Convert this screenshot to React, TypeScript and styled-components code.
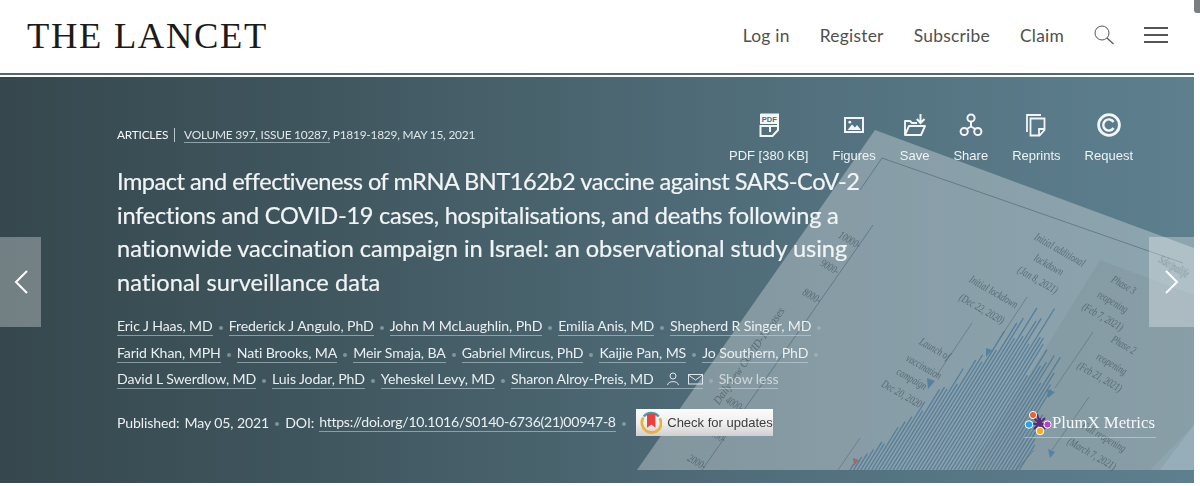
import React from "react";
import styled, { createGlobalStyle } from "styled-components";

const GlobalStyle = createGlobalStyle`
  html, body { margin: 0; padding: 0; background: #fff; }
  body { width: 1200px; height: 486px; overflow: hidden; font-family: "Lato", "Liberation Sans", sans-serif; }
`;

const Page = styled.div`
  display: flex;
  width: 1200px;
  height: 486px;
`;
const Main = styled.div`
  flex: 1;
  min-width: 0;
`;
const Scrollbar = styled.div`
  width: 6px;
`;
const Thumb = styled.div`
  height: 13px;
  background: #7b7f82;
  border-radius: 0 0 0 3px;
`;

const Header = styled.header`
  height: 73px;
  display: flex;
  align-items: center;
  justify-content: space-between;
  padding: 0 26px 3px 27px;
  box-sizing: border-box;
`;
const Logo = styled.div`
  font-family: "Liberation Serif", serif;
  font-size: 36.5px;
  letter-spacing: 1.7px;
  color: #1d1a1a;
  white-space: nowrap;
`;
const Nav = styled.nav`
  display: flex;
  align-items: center;
  gap: 30px;
`;
const NavLink = styled.a`
  font-family: "Lato", sans-serif;
  font-size: 17.4px;
  color: #505050;
  letter-spacing: 0.25px;
`;
const IconButton = styled.span`
  display: flex;
  color: #555;
`;
const Rule = styled.div`
  height: 4px;
  box-sizing: border-box;
  border-top: 2px solid #4d6a74;
  background: #fff;
`;

const Hero = styled.section`
  position: relative;
  height: 406px;
  overflow: hidden;
  background: linear-gradient(90deg, #36484e 0%, #3f555d 25%, #4b6671 50%, #557482 75%, #5d7f8e 100%);
`;
const Art = styled.svg`
  position: absolute;
  left: 0;
  top: 0;
`;
const HeroBody = styled.div`
  position: relative;
  padding: 36px 61px 0 117px;
`;
const TopRow = styled.div`
  display: flex;
  justify-content: space-between;
  align-items: flex-start;
`;
const Meta = styled.div`
  display: flex;
  align-items: center;
  margin-top: 13px;
  font-size: 11.9px;
  letter-spacing: -0.23px;
  color: #dfe6e9;
  white-space: nowrap;
`;
const MetaLabel = styled.span`
  color: #f4f6f7;
`;
const MetaDivider = styled.span`
  width: 1px;
  height: 14px;
  margin: 0 9px 0 6px;
  background: #b9c6cb;
`;
const MetaLink = styled.span`
  border-bottom: 1px solid #8fa3ab;
  line-height: 17px;
`;
const Toolbar = styled.div`
  display: flex;
  gap: 24px;
`;
const ToolItem = styled.a`
  display: flex;
  flex-direction: column;
  align-items: center;
  gap: 10px;
  color: #eef3f5;
  font-family: "Liberation Sans", sans-serif;
  font-size: 13px;
  line-height: 18px;
  white-space: nowrap;
`;
const ToolIcon = styled.svg`
  display: block;
  color: #f3f6f7;
`;
const Title = styled.h1`
  margin: 0;
  font-family: "Lato", sans-serif;
  font-size: 23.6px;
  line-height: 33.6px;
  font-weight: 400;
  color: #f1f4f5;
  white-space: nowrap;
  -webkit-text-stroke: 0.2px #f1f4f5;
`;
const TitleLine = styled.span<{ $tracking: number }>`
  display: block;
  letter-spacing: ${(p) => p.$tracking}px;
`;
const Authors = styled.div`
  margin-top: 14px;
`;
const AuthorLine = styled.div`
  display: flex;
  align-items: center;
  height: 26.6px;
  font-size: 14.1px;
  letter-spacing: -0.1px;
  color: #eaeff1;
  white-space: nowrap;
`;
const LinkText = styled.a<{ $faint?: boolean; $tight?: boolean }>`
  line-height: 18px;
  border-bottom: 1px solid ${(p) => (p.$faint ? "rgba(255,255,255,.35)" : "rgba(200,215,222,.55)")};
  color: ${(p) => (p.$faint ? "rgba(255,255,255,.6)" : "inherit")};
  ${(p) => (p.$tight ? "letter-spacing: -0.27px;" : "")}
`;
const Dot = styled.span`
  width: 4px;
  height: 4px;
  margin: 3px 6px 0;
  border-radius: 50%;
  background: rgba(170, 185, 192, 0.6);
`;
const PersonMail = styled.span`
  display: inline-flex;
  align-items: center;
  gap: 8px;
  margin-left: 12px;
  color: #dfe7ea;
  vertical-align: -2px;
`;
const BottomRow = styled.div`
  display: flex;
  align-items: center;
  height: 27px;
  margin-top: 16px;
  margin-right: -23px;
  font-size: 14.1px;
  letter-spacing: -0.12px;
  color: #eaeff1;
  white-space: nowrap;
`;
const FieldLabel = styled.span`
  margin-right: 5px;
`;
const UpdatesButton = styled.a`
  display: flex;
  align-items: center;
  gap: 5px;
  height: 27px;
  width: 137px;
  box-sizing: border-box;
  padding-left: 4px;
  margin-left: 4px;
  background: linear-gradient(180deg, #fbfbfb 0%, #eee 55%, #cfcfcf 100%);
  color: #3c3c3c;
  font-family: "Liberation Sans", sans-serif;
  font-size: 13px;
  letter-spacing: 0;
`;
const Plum = styled.a`
  display: flex;
  align-items: center;
  gap: 0;
  margin-left: auto;
  height: 29px;
  margin-top: 1px;
  width: 132px;
  border-bottom: 1px solid rgba(255, 255, 255, 0.35);
  font-family: "Liberation Serif", serif;
  font-size: 16.8px;
  letter-spacing: 0;
  color: #f6f8f9;
`;
const Pager = styled.a<{ $side: "left" | "right" }>`
  position: absolute;
  top: 160px;
  ${(p) => (p.$side === "left" ? "left: 0; width: 41px;" : "right: 0; width: 45px;")}
  height: 90px;
  display: flex;
  align-items: center;
  justify-content: center;
  background: rgba(255, 255, 255, 0.3);
  color: #fff;
`;

const author1 = ["Eric J Haas, MD", "Frederick J Angulo, PhD", "John M McLaughlin, PhD", "Emilia Anis, MD", "Shepherd R Singer, MD"];
const author2 = ["Farid Khan, MPH", "Nati Brooks, MA", "Meir Smaja, BA", "Gabriel Mircus, PhD", "Kaijie Pan, MS", "Jo Southern, PhD"];
const author3 = ["David L Swerdlow, MD", "Luis Jodar, PhD", "Yeheskel Levy, MD"];

// outline of the epidemic curve in the background figure: x at the paper foot -> height
const curve: [number, number][] = [
  [850, 8], [867, 32], [878, 60], [889, 82], [907, 113], [927, 158], [934, 163], [948, 157],
  [956, 163], [967, 123], [993, 113], [1006, 63], [1021, 20],
];
const curveAt = (x: number) => {
  for (let i = 1; i < curve.length; i++) {
    if (x <= curve[i][0]) {
      const [x0, h0] = curve[i - 1];
      const [x1, h1] = curve[i];
      return h0 + ((x - x0) / (x1 - x0)) * (h1 - h0);
    }
  }
  return 0;
};
const bars: [number, number][] = [];
for (let x = 850; x <= 1021; x += 3.6) {
  const i = bars.length;
  bars.push([x, curveAt(x) * (0.74 + 0.26 * Math.abs(Math.sin(i * 1.9)))]);
}

const labels: [string, number, number][] = [
  ["Initial additional", 1058, 253],
  ["lockdown", 1047, 268],
  ["(Jan 8, 2021)", 1036, 283],
  ["Initial lockdown", 992, 295],
  ["(Dec 22, 2020)", 980, 312],
  ["Launch of", 933, 352],
  ["vaccination", 922, 370],
  ["campaign", 910, 382],
  ["Dec 20, 2020", 900, 397],
  ["Phase 3", 1122, 288],
  ["reopening", 1111, 305],
  ["(Feb 7, 2021)", 1101, 320],
  ["Phase 2", 1122, 348],
  ["reopening", 1110, 367],
  ["(Feb 21, 2021)", 1098, 380],
  ["Full reopening", 1102, 440],
  ["(March 7, 2021)", 1090, 457],
  ["10000-", 848, 243],
  ["9000-", 828, 270],
  ["8000-", 810, 299],
  ["4000-", 733, 407],
  ["3000-", 715, 438],
  ["2000-", 695, 465],
  ["Sde/palife", 1172, 270],
];

const Background = () => (
  <Art width="1194" height="406" viewBox="0 77 1194 406">
    <polygon points="875,130 1194,248 1194,470 637,470" fill="#fff" opacity="0.3" />
    <polygon points="1100,260 1194,295 1194,425 1150,470 970,470" fill="#6d7c7e" opacity="0.16" />
    <polygon points="1194,425 1194,470 1160,470" fill="#a8c4d2" opacity="0.3" />
    <g stroke="#4a6573" strokeWidth="0.8" fill="none" opacity="0.75">
      <path d="M882 158 L1183 263" />
      <path d="M882 158 L860 190" />
      <path d="M873 225 L702 470" />
    </g>
    <g stroke="#4a7797" strokeWidth="1.2" opacity="0.85">
      {bars.map(([x, h], i) => (
        <line key={i} x1={x} y1={470} x2={x + h * 0.62} y2={470 - h} />
      ))}
    </g>
    <g stroke="#5b7480" strokeWidth="0.8" opacity="0.8">
      <path d="M972 323 L937 375" />
      <path d="M1027 297 L1000 338" />
      <path d="M1093 332 L1055 388" />
      <path d="M1089 397 L1052 450" />
      <path d="M860 438 L838 470" />
      <path d="M1034 450 L1016 470" />
    </g>
    <g fill="#4d7ea3" opacity="0.85">
      <polygon points="927,378 935,381 928,389" />
      <polygon points="986,348 992,350 986,357" />
      <polygon points="1047,389 1055,392 1048,398" />
      <polygon points="1048,449 1055,452 1050,458" />
    </g>
    <polygon points="853,458 859,460 854,466" fill="#a0605c" opacity="0.8" />
    <g fontFamily="Liberation Serif, serif" fontSize="11.5" fontStyle="italic" fill="#44555e" opacity="0.7" textAnchor="middle">
      {labels.map(([text, x, y], i) => (
        <text key={i} transform={`translate(${x} ${y}) rotate(30) scale(0.72 1)`}>{text}</text>
      ))}
      <text transform="translate(752 358) rotate(-55) scale(0.9 1)">Daily new COVID-19 cases</text>
    </g>
  </Art>
);

const PdfIcon = () => (
  <ToolIcon width="24" height="24" viewBox="0 0 24 24">
    <path d="M3.5 1.5 H21 V17 L15.5 23 H3.5 V13 H13 V19 M13 13 H21" fill="none" stroke="currentColor" strokeWidth="2" />
    <rect x="3" y="1" width="18.5" height="10" fill="currentColor" />
    <text x="12.3" y="9" textAnchor="middle" fontFamily="Liberation Sans, sans-serif" fontWeight="700" fontSize="7.5" fill="#4f6d7a">PDF</text>
  </ToolIcon>
);
const FiguresIcon = () => (
  <ToolIcon width="24" height="24" viewBox="0 0 24 24">
    <rect x="3" y="5" width="18" height="14" fill="none" stroke="currentColor" strokeWidth="2" />
    <circle cx="7.8" cy="9.2" r="1.4" fill="currentColor" />
    <path d="M5.5 17 L10 11.5 L13 14.5 L15 12 L19 17 Z" fill="currentColor" />
  </ToolIcon>
);
const SaveIcon = () => (
  <ToolIcon width="24" height="24" viewBox="0 0 24 24">
    <path d="M2 22 V8 H7 L9 10 H14 M2 22 L6 13 H22 L18 22 Z" fill="none" stroke="currentColor" strokeWidth="1.9" strokeLinejoin="round" />
    <path d="M17.5 1 V9 M13.8 6 L17.5 10 L21.5 6" fill="none" stroke="currentColor" strokeWidth="2" />
  </ToolIcon>
);
const ShareIcon = () => (
  <ToolIcon width="24" height="24" viewBox="0 0 24 24">
    <g fill="none" stroke="currentColor" strokeWidth="2">
      <circle cx="12" cy="5" r="3.6" />
      <circle cx="5.2" cy="18.5" r="3.6" />
      <circle cx="18.8" cy="18.5" r="3.6" />
      <path d="M12 8.6 V13.5 M12 13.5 L7.8 16 M12 13.5 L16.2 16" />
    </g>
  </ToolIcon>
);
const ReprintsIcon = () => (
  <ToolIcon width="24" height="24" viewBox="0 0 24 24">
    <g fill="none" stroke="currentColor" strokeWidth="1.8">
      <path d="M17 2 H3 V19" />
      <path d="M6.5 5.5 H20.5 V17 L15.5 22.5 H6.5 Z" />
      <path d="M20 16 H15 V22" />
    </g>
  </ToolIcon>
);
const RequestIcon = () => (
  <ToolIcon width="24" height="24" viewBox="0 0 24 24">
    <circle cx="12" cy="12" r="10.4" fill="none" stroke="currentColor" strokeWidth="2.8" />
    <path d="M16.6 9 A5.6 5.6 0 1 0 16.6 15" fill="none" stroke="currentColor" strokeWidth="2.4" />
  </ToolIcon>
);

const tools = [
  { label: "PDF [380 KB]", icon: <PdfIcon /> },
  { label: "Figures", icon: <FiguresIcon /> },
  { label: "Save", icon: <SaveIcon /> },
  { label: "Share", icon: <ShareIcon /> },
  { label: "Reprints", icon: <ReprintsIcon /> },
  { label: "Request", icon: <RequestIcon /> },
];

const titleLines: [string, number][] = [
  ["Impact and effectiveness of mRNA BNT162b2 vaccine against SARS-CoV-2", -0.5],
  ["infections and COVID-19 cases, hospitalisations, and deaths following a", -0.24],
  ["nationwide vaccination campaign in Israel: an observational study using", -0.04],
  ["national surveillance data", 0.08],
];

const Chevron = ({ dir }: { dir: "left" | "right" }) => (
  <svg width="16" height="26" viewBox="0 0 16 26">
    <path d={dir === "left" ? "M14 2 L3 13 L14 24" : "M2 2 L13 13 L2 24"} fill="none" stroke="currentColor" strokeWidth="2" />
  </svg>
);

const CrossmarkIcon = () => (
  <svg width="24" height="24" viewBox="0 0 24 24">
    <path d="M3.6 6 A10.5 10.5 0 0 0 20.4 18.5 A10.5 10.5 0 0 0 21 7" fill="none" stroke="#e9b23f" strokeWidth="3" />
    <path d="M4 5 A10.5 10.5 0 0 1 20 5" fill="none" stroke="#3f9fb8" strokeWidth="2.6" />
    <path d="M7.5 2 H16.5 V17 L12 13.5 L7.5 17 Z" fill="#e8423f" />
  </svg>
);

const PlumIcon = () => (
  <svg width="28" height="26" viewBox="0 0 28 26">
    <path d="M13 4 L16 14 M5 14 L26 14 M16 8 L16 21 M10 8 L21 19 M21 8 L10 19" stroke="#5b2a7c" strokeWidth="2" />
    <circle cx="9" cy="5" r="3.6" fill="#e8622c" stroke="#fff" strokeWidth="1" />
    <circle cx="5" cy="14.5" r="3.8" fill="#2aa4de" stroke="#fff" strokeWidth="1" />
    <circle cx="23.5" cy="14.5" r="3.6" fill="#b63fd0" stroke="#fff" strokeWidth="1" />
    <circle cx="16" cy="21" r="3.8" fill="#eeb021" stroke="#fff" strokeWidth="1" />
  </svg>
);

const AuthorRow = ({ names }: { names: string[] }) => (
  <>
    {names.map((name) => (
      <React.Fragment key={name}>
        <LinkText>{name}</LinkText>
        <Dot />
      </React.Fragment>
    ))}
  </>
);

export default function App() {
  return (
    <Page>
      <GlobalStyle />
      <Main>
        <Header>
          <Logo>THE LANCET</Logo>
          <Nav>
            <NavLink>Log in</NavLink>
            <NavLink>Register</NavLink>
            <NavLink>Subscribe</NavLink>
            <NavLink>Claim</NavLink>
            <IconButton>
              <svg width="20" height="20" viewBox="0 0 20 20">
                <circle cx="8" cy="8" r="7" fill="none" stroke="currentColor" strokeWidth="1" />
                <path d="M13 13 L19.5 19" stroke="currentColor" strokeWidth="1.2" />
              </svg>
            </IconButton>
            <IconButton>
              <svg width="24" height="18" viewBox="0 0 24 18">
                <path d="M0 2 H24 M0 9 H24 M0 16 H24" stroke="currentColor" strokeWidth="2" />
              </svg>
            </IconButton>
          </Nav>
        </Header>
        <Rule />
        <Hero>
          <Background />
          <HeroBody>
            <TopRow>
              <Meta>
                <MetaLabel>ARTICLES</MetaLabel>
                <MetaDivider />
                <span>
                  <MetaLink>VOLUME 397, ISSUE 10287,</MetaLink> P1819-1829, MAY 15, 2021
                </span>
              </Meta>
              <Toolbar>
                {tools.map((tool) => (
                  <ToolItem key={tool.label}>
                    {tool.icon}
                    {tool.label}
                  </ToolItem>
                ))}
              </Toolbar>
            </TopRow>
            <Title>
              {titleLines.map(([line, tracking]) => (
                <TitleLine key={line} $tracking={tracking}>
                  {line}
                </TitleLine>
              ))}
            </Title>
            <Authors>
              <AuthorLine>
                <AuthorRow names={author1} />
              </AuthorLine>
              <AuthorLine>
                <AuthorRow names={author2} />
              </AuthorLine>
              <AuthorLine>
                <AuthorRow names={author3} />
                <LinkText>
                  Sharon Alroy-Preis, MD
                  <PersonMail>
                    <svg width="14" height="14" viewBox="0 0 14 14">
                      <circle cx="7" cy="4" r="3" fill="none" stroke="currentColor" />
                      <path d="M1.5 13 C2 8.5 12 8.5 12.5 13" fill="none" stroke="currentColor" />
                    </svg>
                    <svg width="15" height="12" viewBox="0 0 15 12">
                      <rect x="0.5" y="1.5" width="14" height="9.5" fill="none" stroke="currentColor" />
                      <path d="M0.5 2 L7.5 7 L14.5 2" fill="none" stroke="currentColor" />
                    </svg>
                  </PersonMail>
                </LinkText>
                <Dot />
                <LinkText $faint>Show less</LinkText>
              </AuthorLine>
            </Authors>
            <BottomRow>
              <FieldLabel>Published:</FieldLabel> May 05, 2021
              <Dot />
              <FieldLabel>DOI:</FieldLabel>
              <LinkText $tight>https://doi.org/10.1016/S0140-6736(21)00947-8</LinkText>
              <Dot />
              <UpdatesButton>
                <CrossmarkIcon />
                Check for updates
              </UpdatesButton>
              <Plum>
                <PlumIcon />
                PlumX Metrics
              </Plum>
            </BottomRow>
          </HeroBody>
          <Pager $side="left">
            <Chevron dir="left" />
          </Pager>
          <Pager $side="right">
            <Chevron dir="right" />
          </Pager>
        </Hero>
      </Main>
      <Scrollbar>
        <Thumb />
      </Scrollbar>
    </Page>
  );
}
